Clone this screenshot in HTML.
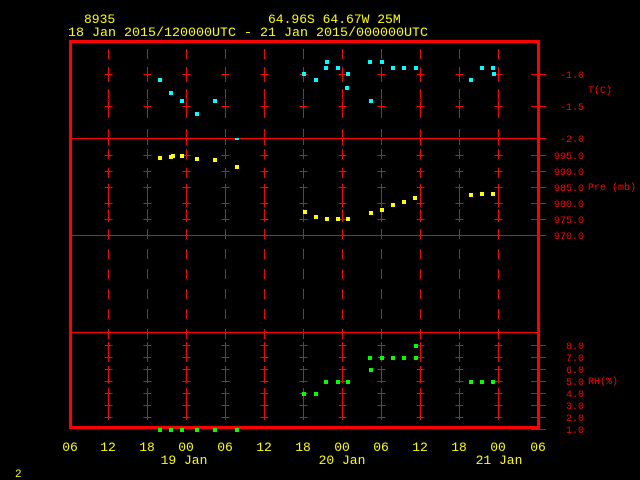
<!DOCTYPE html>
<html><head><meta charset="utf-8"><style>
html,body{margin:0;padding:0;background:#000;width:640px;height:480px;overflow:hidden}
svg{display:block}
text{font-family:"Liberation Mono",monospace}
</style></head><body>
<svg width="640" height="480" viewBox="0 0 640 480" xmlns="http://www.w3.org/2000/svg" xmlns:xlink="http://www.w3.org/1999/xlink">
<defs>
<g id="col" stroke="#f00" stroke-width="1" fill="none">
<path d="M0.5 49V59M0.5 67V82M0.5 89V99M0.5 100V118M0.5 129V137M0.5 138V145
M-3.5 74.5H4.5M-3.5 106.5H4.5
M0.5 149V159M0.5 168V178M0.5 184V199M0.5 199V207M0.5 209V222M0.5 229V239
M-3.5 155.5H4.5M-3.5 171.5H4.5M-3.5 187.5H4.5M-3.5 203.5H4.5M-3.5 219.5H4.5
M0.5 249V259M0.5 269V279M0.5 289V299M0.5 309V319M0.5 329V339
M0.5 342V362M0.5 366V383M0.5 388V420
M-3.5 345.5H4.5M-3.5 357.5H4.5M-3.5 369.5H4.5M-3.5 381.5H4.5M-3.5 393.5H4.5M-3.5 405.5H4.5M-3.5 417.5H4.5"/>
</g>
</defs>
<use xlink:href="#col" x="108"/><use xlink:href="#col" x="147"/><use xlink:href="#col" x="186"/>
<use xlink:href="#col" x="225"/><use xlink:href="#col" x="264"/><use xlink:href="#col" x="303"/>
<use xlink:href="#col" x="342"/><use xlink:href="#col" x="381"/><use xlink:href="#col" x="420"/>
<use xlink:href="#col" x="459"/><use xlink:href="#col" x="498"/>
<g stroke="#f00" fill="none">
<path d="M70 138.5H539M70 235.5H539M70 332.5H539" stroke-width="1"/>
<rect x="70.5" y="41.5" width="468" height="386" stroke-width="3"/>
<path d="M531 74.5H546M531 106.5H546M531 138.5H546M531 155.5H546M531 171.5H546M531 187.5H546M531 203.5H546M531 219.5H546M531 235.5H546M531 345.5H546M531 357.5H546M531 369.5H546M531 381.5H546M531 393.5H546M531 405.5H546M531 417.5H546M531 429.5H546"/>
</g>
<g fill="#0ff">
<rect x="158" y="78" width="4" height="4"/><rect x="169" y="91" width="4" height="4"/><rect x="180" y="99" width="4" height="4"/><rect x="195" y="112" width="4" height="4"/><rect x="213" y="99" width="4" height="4"/><rect x="235" y="138" width="4" height="2"/>
<rect x="302" y="72" width="4" height="4"/><rect x="314" y="78" width="4" height="4"/><rect x="325" y="60" width="4" height="4"/><rect x="324" y="66" width="4" height="4"/><rect x="336" y="66" width="4" height="4"/><rect x="346" y="72" width="4" height="4"/><rect x="345" y="86" width="4" height="4"/><rect x="369" y="99" width="4" height="4"/><rect x="368" y="60" width="4" height="4"/><rect x="380" y="60" width="4" height="4"/><rect x="391" y="66" width="4" height="4"/><rect x="402" y="66" width="4" height="4"/><rect x="414" y="66" width="4" height="4"/>
<rect x="469" y="78" width="4" height="4"/><rect x="480" y="66" width="4" height="4"/><rect x="491" y="66" width="4" height="4"/><rect x="492" y="72" width="4" height="4"/>
</g>
<g fill="#ff0">
<rect x="158" y="156" width="4" height="4"/><rect x="169" y="155" width="4" height="4"/><rect x="171" y="154" width="4" height="4"/><rect x="180" y="154" width="4" height="4"/><rect x="195" y="157" width="4" height="4"/><rect x="213" y="158" width="4" height="4"/><rect x="235" y="165" width="4" height="4"/>
<rect x="303" y="210" width="4" height="4"/><rect x="314" y="215" width="4" height="4"/><rect x="325" y="217" width="4" height="4"/><rect x="336" y="217" width="4" height="4"/><rect x="346" y="217" width="4" height="4"/><rect x="369" y="211" width="4" height="4"/><rect x="380" y="208" width="4" height="4"/><rect x="391" y="203" width="4" height="4"/><rect x="402" y="200" width="4" height="4"/><rect x="413" y="196" width="4" height="4"/>
<rect x="469" y="193" width="4" height="4"/><rect x="480" y="192" width="4" height="4"/><rect x="491" y="192" width="4" height="4"/>
</g>
<g fill="#0f0">
<rect x="158" y="428" width="4" height="4"/><rect x="169" y="428" width="4" height="4"/><rect x="180" y="428" width="4" height="4"/><rect x="195" y="428" width="4" height="4"/><rect x="213" y="428" width="4" height="4"/><rect x="235" y="428" width="4" height="4"/>
<rect x="302" y="392" width="4" height="4"/><rect x="314" y="392" width="4" height="4"/><rect x="324" y="380" width="4" height="4"/><rect x="336" y="380" width="4" height="4"/><rect x="346" y="380" width="4" height="4"/><rect x="369" y="368" width="4" height="4"/><rect x="368" y="356" width="4" height="4"/><rect x="380" y="356" width="4" height="4"/><rect x="391" y="356" width="4" height="4"/><rect x="402" y="356" width="4" height="4"/><rect x="414" y="344" width="4" height="4"/><rect x="414" y="356" width="4" height="4"/>
<rect x="469" y="380" width="4" height="4"/><rect x="480" y="380" width="4" height="4"/><rect x="491" y="380" width="4" height="4"/>
</g>
<g fill="#ff0" font-size="13">
<text x="84" y="23">8935</text>
<text x="268" y="23">64.96S  64.67W   25M</text>
<text x="68" y="36" textLength="360" lengthAdjust="spacingAndGlyphs">18 Jan 2015/120000UTC - 21 Jan 2015/000000UTC</text>
<g text-anchor="middle">
<text x="70" y="451">06</text><text x="108" y="451">12</text><text x="147" y="451">18</text><text x="186" y="451">00</text><text x="225" y="451">06</text><text x="264" y="451">12</text><text x="303" y="451">18</text><text x="342" y="451">00</text><text x="381" y="451">06</text><text x="420" y="451">12</text><text x="459" y="451">18</text><text x="498" y="451">00</text><text x="538" y="451">06</text>
<text x="184" y="464">19 Jan</text><text x="342" y="464">20 Jan</text><text x="499" y="464">21 Jan</text>
</g>
<text x="15" y="477" font-size="11">2</text>
</g>
<g fill="#f00" font-size="10" text-anchor="end">
<text x="584" y="78">-1.0</text><text x="584" y="110">-1.5</text><text x="584" y="142">-2.0</text>
<text x="584" y="159">995.0</text><text x="584" y="175">990.0</text><text x="584" y="191">985.0</text><text x="584" y="207">980.0</text><text x="584" y="223">975.0</text><text x="584" y="239">970.0</text>
<text x="584" y="349">8.0</text><text x="584" y="361">7.0</text><text x="584" y="373">6.0</text><text x="584" y="385">5.0</text><text x="584" y="397">4.0</text><text x="584" y="409">3.0</text><text x="584" y="421">2.0</text><text x="584" y="433">1.0</text>
</g>
<g fill="#f00" font-size="10">
<text x="588" y="93">T(C)</text>
<text x="588" y="190">Pre (mb)</text>
<text x="588" y="384">RH(%)</text>
</g>
</svg>
</body></html>
